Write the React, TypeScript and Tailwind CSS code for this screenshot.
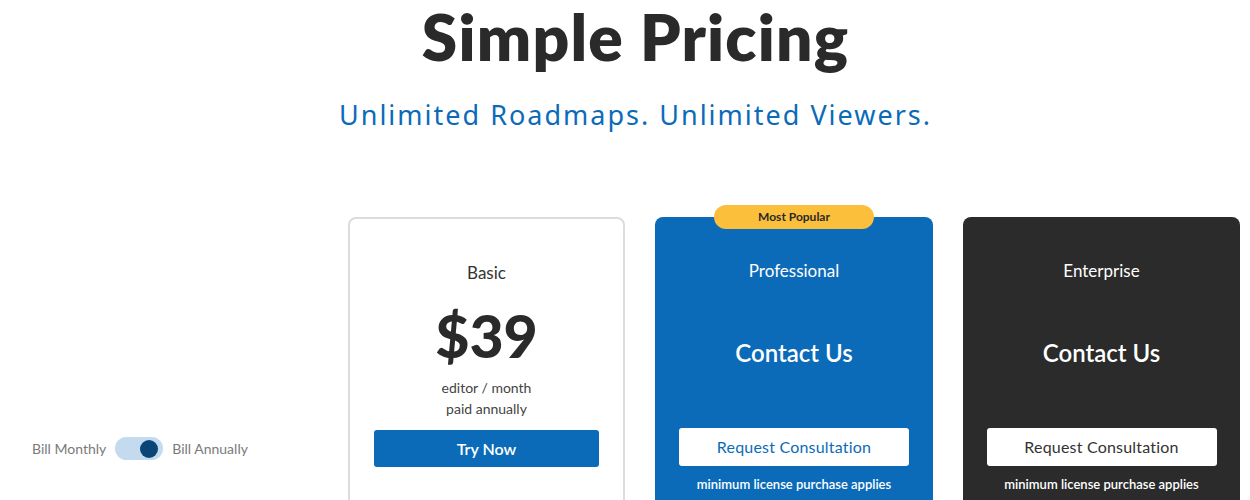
import React from "react";

const font = { fontFamily: '"Lato", "Open Sans", sans-serif' };
const wide = { fontFamily: '"Noto Sans", "Lato", sans-serif' };

export default function App() {
  return (
    <div className="w-[1250px] h-[500px] overflow-hidden bg-white text-[#292a29]" style={font}>
      <div className="flex flex-col items-center pl-[21px]">
        <h1 className="text-[64px] leading-[74px] font-extrabold tracking-[1.2px] text-[#292a29]">
          Simple Pricing
        </h1>
        <p className="mt-[23px] text-[27px] leading-[36px] tracking-[2px] text-[#0b6bb8]" style={wide}>
          Unlimited Roadmaps. Unlimited Viewers.
        </p>
      </div>
      <div className="mt-[84px] flex pl-[32px]">
        <div className="w-[316px] shrink-0 pt-[220px]">
          <div className="flex items-center gap-[9px] text-[14px] text-[#7a7a7a]">
            <span>Bill Monthly</span>
            <div className="relative h-[23px] w-[48px] rounded-full bg-[#c3daef]">
              <div className="absolute right-[5px] top-[2.5px] h-[18px] w-[18px] rounded-full bg-[#0b4577]" />
            </div>
            <span>Bill Annually</span>
          </div>
        </div>
        <div className="flex gap-[30px]">
          <div className="flex h-[320px] w-[277px] flex-col items-center rounded-[8px] border-2 border-[#dcdce0] bg-white pt-[42px]">
            <div className="text-[17px] leading-[24px] text-[#333]">Basic</div>
            <div className="mt-[16px] text-[59px] leading-[70px] font-black text-[#292a29]">$39</div>
            <div className="mt-[6px] text-[14px] leading-[21px] text-[#444]">editor / month</div>
            <div className="text-[14px] leading-[21px] text-[#444]">paid annually</div>
            <button className="mt-[11px] h-[37px] w-[225px] rounded-[3px] bg-[#0b6bb8] text-[16px] font-semibold text-white">
              Try Now
            </button>
          </div>
          <div className="relative flex h-[320px] w-[278px] flex-col items-center rounded-[8px] bg-[#0b6bb8] pt-[42px] text-white">
            <div className="absolute left-1/2 top-[-12px] flex h-[24px] w-[160px] -translate-x-1/2 items-center justify-center rounded-full bg-[#fcbf3c] text-[12px] font-bold text-[#292a29]">
              Most Popular
            </div>
            <div className="text-[17px] leading-[24px]">Professional</div>
            <div className="mt-[54px] text-[24px] leading-[32px] font-semibold">Contact Us</div>
            <button className="mt-[59px] h-[38px] w-[230px] rounded-[3px] bg-white text-[16px] tracking-[0.2px] text-[#0b6bb8]">
              Request Consultation
            </button>
            <div className="mt-[9px] text-[13px] leading-[18px] font-semibold">minimum license purchase applies</div>
          </div>
          <div className="flex h-[320px] w-[277px] flex-col items-center rounded-[8px] bg-[#2a2b2a] pt-[42px] text-white">
            <div className="text-[17px] leading-[24px]">Enterprise</div>
            <div className="mt-[54px] text-[24px] leading-[32px] font-semibold">Contact Us</div>
            <button className="mt-[59px] h-[38px] w-[230px] rounded-[3px] bg-white text-[16px] tracking-[0.2px] text-[#333]">
              Request Consultation
            </button>
            <div className="mt-[9px] text-[13px] leading-[18px] font-semibold">minimum license purchase applies</div>
          </div>
        </div>
      </div>
    </div>
  );
}
